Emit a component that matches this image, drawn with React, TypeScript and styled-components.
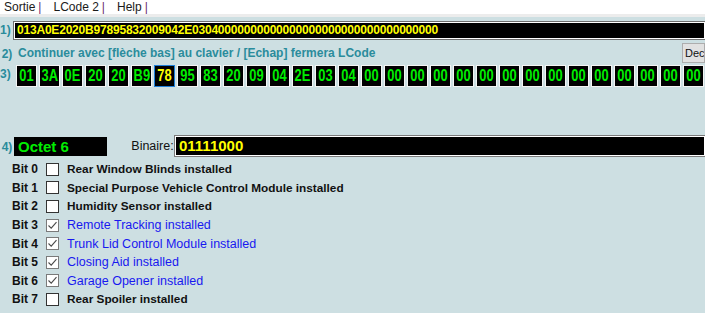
import React from "react";
import styled, { createGlobalStyle } from "styled-components";

const HEX = "013A0E2020B97895832009042E0304" + "0".repeat(34);
const BYTES = HEX.match(/../g) || [];
const SELECTED = 6;

const BITS = [
  { label: "Rear Window Blinds installed", on: false },
  { label: "Special Purpose Vehicle Control Module installed", on: false },
  { label: "Humidity Sensor installed", on: false },
  { label: "Remote Tracking installed", on: true },
  { label: "Trunk Lid Control Module installed", on: true },
  { label: "Closing Aid installed", on: true },
  { label: "Garage Opener installed", on: true },
  { label: "Rear Spoiler installed", on: false },
];

const GlobalStyle = createGlobalStyle`
  html, body {
    margin: 0;
    padding: 0;
    background: #ffffff;
    font-family: "Liberation Sans", Arial, sans-serif;
    text-align: left;
  }
  #root {
    text-align: left;
  }
`;

const Check = () => (
  <svg width="11" height="11" viewBox="0 0 11 11">
    <path d="M1.5 5.5 L4.2 8.2 L9.5 2.2" fill="none" stroke="#4a4a4a" strokeWidth="1.1" />
  </svg>
);

const App = () => {
  return (
    <>
      <GlobalStyle />
      <Window>
        <MenuBar>
          <MenuItem>Sortie<Sep>|</Sep></MenuItem>
          <MenuItem>LCode 2<Sep>|</Sep></MenuItem>
          <MenuItem>Help<Sep>|</Sep></MenuItem>
        </MenuBar>

        <Body>
          <Row top={4}>
            <Num>1)</Num>
            <HexField>{HEX}</HexField>
          </Row>

          <Row top={4} align="center">
            <Num>2)</Num>
            <Hint>Continuer avec [flèche bas] au clavier / [Echap] fermera LCode</Hint>
            <DecButton>Dec</DecButton>
          </Row>

          <Row top={2}>
            <Num>3)</Num>
            <Cells>
              {BYTES.map((b, i) => (
                <Cell key={i} selected={i === SELECTED}>
                  <Narrow>{b}</Narrow>
                </Cell>
              ))}
            </Cells>
          </Row>

          <Row top={49} align="center">
            <Num>4)</Num>
            <OctetBox>Octet 6</OctetBox>
            <BinLabel>Binaire:</BinLabel>
            <BinField>01111000</BinField>
          </Row>

          <BitList>
            {BITS.map((b, i) => (
              <BitRow key={i}>
                <BitName>Bit {i}</BitName>
                <Box on={b.on}>{b.on && <Check />}</Box>
                <BitText on={b.on}>{b.label}</BitText>
              </BitRow>
            ))}
          </BitList>
        </Body>
      </Window>
    </>
  );
};

export default App;

const Window = styled.div`
  width: 705px;
  height: 313px;
  overflow: hidden;
  display: flex;
  flex-direction: column;
  text-align: left;
`;

const MenuBar = styled.div`
  height: 14px;
  display: flex;
  align-items: center;
  background: #ffffff;
  border-bottom: 3px solid #ececec;
  font-size: 12px;
  color: #1a1a1a;
  padding-left: 4px;
`;

const MenuItem = styled.span`
  margin-right: 12px;
  line-height: 14px;
`;

const Sep = styled.span`
  color: #6a2a72;
  margin-left: 3px;
`;

const Body = styled.div`
  flex: 1;
  background: #cddfe2;
  display: flex;
  flex-direction: column;
`;

const Row = styled.div<{ top: number; align?: string }>`
  display: flex;
  align-items: ${(p) => p.align || "flex-start"};
  margin-top: ${(p) => p.top}px;
`;

const Num = styled.span`
  width: 14px;
  flex-shrink: 0;
  font-size: 12px;
  font-weight: bold;
  color: #2a8c9c;
  padding-top: 2px;
`;

const HexField = styled.div`
  flex: 1;
  height: 15px;
  background: #000;
  border: 1px solid #fff;
  box-shadow: 0 0 0 1px #6e6e6e;
  color: #ffff00;
  font-size: 12px;
  font-weight: bold;
  letter-spacing: -0.2px;
  line-height: 15px;
  padding-left: 2px;
  margin-top: 1px;
  white-space: nowrap;
  overflow: hidden;
  text-align: left;
`;

const Hint = styled.div`
  flex: 1;
  font-size: 12px;
  font-weight: bold;
  color: #2a8c9c;
  padding-left: 4px;
  text-align: left;
`;

const DecButton = styled.div`
  width: 23px;
  height: 20px;
  box-sizing: border-box;
  background: #e1e1e1;
  border: 1px solid #adadad;
  font-size: 11px;
  line-height: 18px;
  padding-left: 2px;
  color: #111;
  overflow: hidden;
  white-space: nowrap;
  text-align: left;
`;

const Cells = styled.div`
  display: flex;
  gap: 2px;
  padding-left: 2px;
  overflow: hidden;
  flex: 1;
`;

const Cell = styled.div<{ selected: boolean }>`
  flex-shrink: 0;
  width: 21px;
  height: 22px;
  box-sizing: border-box;
  background: #000;
  border: 1px solid ${(p) => (p.selected ? "#1e7fd8" : "#f4f4f4")};
  color: ${(p) => (p.selected ? "#ffff00" : "#00ee00")};
  font-size: 17px;
  font-weight: bold;
  line-height: 20px;
  display: flex;
  justify-content: center;
  overflow: hidden;
`;

const Narrow = styled.span`
  display: inline-block;
  transform: scaleX(0.76);
  transform-origin: center;
`;

const OctetBox = styled.div`
  width: 93px;
  height: 19px;
  background: #000;
  color: #00ee00;
  font-size: 15px;
  font-weight: bold;
  line-height: 19px;
  padding-left: 4px;
  box-sizing: border-box;
  text-align: left;
`;

const BinLabel = styled.span`
  font-size: 12.5px;
  color: #111;
  margin-left: 23px;
  width: 45px;
`;

const BinField = styled.div`
  flex: 1;
  height: 18px;
  background: #000;
  border: 1px solid #fff;
  box-shadow: 0 0 0 1px #7a7a7a;
  color: #ffff00;
  font-size: 15px;
  font-weight: bold;
  line-height: 18px;
  padding-left: 3px;
  text-align: left;
`;

const BitList = styled.div`
  display: flex;
  flex-direction: column;
  margin-top: 4px;
`;

const BitRow = styled.div`
  display: flex;
  align-items: center;
  height: 18.6px;
`;

const BitName = styled.span`
  width: 34px;
  padding-left: 12px;
  font-size: 12px;
  font-weight: bold;
  color: #111;
`;

const Box = styled.span<{ on: boolean }>`
  width: 13px;
  height: 13px;
  box-sizing: border-box;
  background: #fff;
  border: 1px solid ${(p) => (p.on ? "#7a7a7a" : "#333")};
  display: flex;
  align-items: center;
  justify-content: center;
  margin-right: 8px;
`;

const BitText = styled.span<{ on: boolean }>`
  font-size: ${(p) => (p.on ? "12.5px" : "11.8px")};
  font-weight: ${(p) => (p.on ? "normal" : "bold")};
  color: ${(p) => (p.on ? "#1818f0" : "#111")};
`;
